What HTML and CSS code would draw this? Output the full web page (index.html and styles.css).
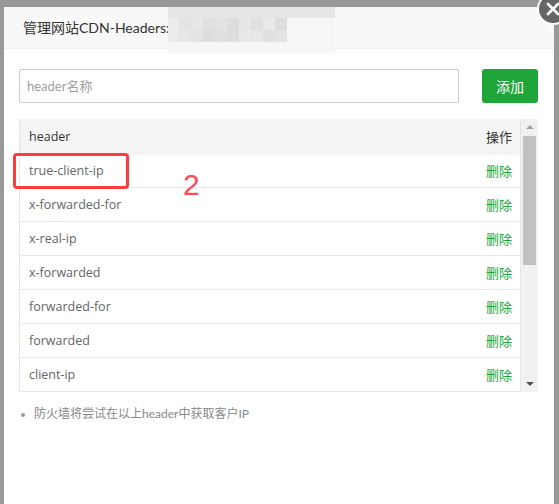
FILE: index.html
```html
<!DOCTYPE html>
<html lang="zh-CN">
<head>
<meta charset="utf-8">
<title>管理网站CDN-Headers</title>
<link rel="stylesheet" href="styles.css">
</head>
<body>
<div class="dialog">
  <div class="dlg-head">
    <span class="title">管理网站CDN-Headers:</span>
  </div>
  <div class="blur">
    <div class="blur-band"></div>
    <div class="blur-mid">
      <div class="blur-left"></div>
      <div class="mosaic">
        <i class="c1"></i><i class="c2"></i><i class="c3"></i><i class="c1"></i><i class="c4"></i><i class="c2"></i><i class="c3"></i><i class="c5"></i><i class="c4"></i>
        <i class="c2"></i><i class="c1"></i><i class="c4"></i><i class="c3"></i><i class="c4"></i><i class="c5"></i><i class="c2"></i><i class="c3"></i><i class="c1"></i>
      </div>
    </div>
  </div>
  <button class="close" aria-label="关闭">
    <svg width="14" height="14" viewBox="0 0 14 14"><path d="M2 2L12 12M12 2L2 12" stroke="#fff" stroke-width="2.6" stroke-linecap="round"/></svg>
  </button>
  <div class="dlg-body">
    <div class="add-row">
      <input class="hdr-input" type="text" placeholder="header名称">
      <button class="btn-add">添加</button>
    </div>
    <div class="tbl-wrap">
      <div class="tbl">
        <div class="thead-row">
          <span class="th-name">header</span>
          <span class="th-op">操作</span>
        </div>
        <table>
          <tbody>
            <tr><td>true-client-ip</td><td class="col-op"><a class="del">删除</a></td></tr>
            <tr><td>x-forwarded-for</td><td class="col-op"><a class="del">删除</a></td></tr>
            <tr><td>x-real-ip</td><td class="col-op"><a class="del">删除</a></td></tr>
            <tr><td>x-forwarded</td><td class="col-op"><a class="del">删除</a></td></tr>
            <tr><td>forwarded-for</td><td class="col-op"><a class="del">删除</a></td></tr>
            <tr><td>forwarded</td><td class="col-op"><a class="del">删除</a></td></tr>
            <tr><td>client-ip</td><td class="col-op"><a class="del">删除</a></td></tr>
          </tbody>
        </table>
      </div>
      <div class="scrollbar">
        <span class="arr up"></span>
        <span class="thumb"></span>
        <span class="rest"></span>
        <span class="arr down"></span>
      </div>
    </div>
    <ul class="tips">
      <li>防火墙将尝试在以上header中获取客户IP</li>
    </ul>
  </div>
</div>
<div class="mark-box"></div>
<div class="mark-num">2</div>
</body>
</html>
```

FILE: styles.css
```css
html, body {
  margin: 0;
  padding: 0;
}
body {
  background: #999999;
  width: 559px;
  height: 504px;
  overflow: hidden;
  position: relative;
  font-family: Lato, "Noto Sans CJK SC", sans-serif;
}
.dialog {
  position: relative;
  margin: 7px 5px 0 4px;
  width: 550px;
  height: 497px;
  background: #fff;
}
.dlg-head {
  height: 41px;
  line-height: 42px;
  background: #f8f8f8;
  border-bottom: 1px solid #eeeeee;
  padding-left: 19px;
  font-size: 14px;
  color: #333;
}
.blur {
  position: absolute;
  left: 164px;
  top: 0;
  width: 167px;
  height: 46px;
  background: #f6f6f6;
  display: flex;
  flex-direction: column;
}
.blur-band {
  height: 11px;
  background: #e6e6e6;
}
.blur-mid {
  display: flex;
  height: 24px;
}
.blur-left {
  width: 11px;
  background: #ececec;
}
.mosaic {
  display: grid;
  grid-template-columns: repeat(9, 12px);
  grid-template-rows: repeat(2, 12px);
}
.mosaic i { display: block; }
.mosaic .c1 { background: #e3e3e3; }
.mosaic .c2 { background: #e7e7e7; }
.mosaic .c3 { background: #e0e0e0; }
.mosaic .c4 { background: #dddddd; }
.mosaic .c5 { background: #e9e9e9; }

.close {
  position: absolute;
  left: 533px;
  top: -14px;
  width: 32px;
  height: 32px;
  border-radius: 50%;
  border: 2px solid #fff;
  background: #666;
  padding: 0;
  display: flex;
  align-items: center;
  justify-content: center;
  box-sizing: border-box;
}

.dlg-body {
  padding: 20px 16px 0 15px;
}
.add-row {
  display: flex;
  justify-content: space-between;
  align-items: center;
}
.hdr-input {
  width: 440px;
  height: 34px;
  box-sizing: border-box;
  border: 1px solid #cccccc;
  border-radius: 2px;
  padding: 0 7px;
  font-family: inherit;
  font-size: 13px;
  color: #333;
  outline: none;
}
.hdr-input::placeholder { color: #a0a0a0; }
.btn-add {
  width: 56px;
  height: 34px;
  border: none;
  border-radius: 3px;
  background: #20a53a;
  color: #fff;
  font-family: inherit;
  font-size: 14px;
  padding: 0;
}

.tbl-wrap {
  margin-top: 16px;
  display: flex;
  height: 273px;
}
.tbl {
  width: 501px;
  border-left: 1px solid #e6e6e6;
  border-right: 1px solid #e6e6e6;
  font-family: "Open Sans", "Noto Sans CJK SC", sans-serif;
}
.thead-row {
  height: 35px;
  display: flex;
  align-items: center;
  justify-content: space-between;
  padding: 0 8px 0 9px;
  background: #f4f4f4;
  color: #333;
  font-size: 12.5px;
  box-shadow: 0 1px 2px rgba(0,0,0,0.06);
  position: relative;
}
.th-op { font-size: 13px; }
table {
  width: 100%;
  border-collapse: collapse;
  font-size: 12.5px;
}
td {
  height: 33px;
  padding: 0 8px 0 9px;
  color: #666;
  border-bottom: 1px solid #e8e8e8;
}
.col-op { text-align: right; font-size: 13px; }
.del { color: #20a53a; }

.scrollbar {
  width: 17px;
  background: #f1f1f1;
  display: flex;
  flex-direction: column;
  align-items: center;
}
.arr {
  width: 0;
  height: 0;
  border-left: 4px solid transparent;
  border-right: 4px solid transparent;
}
.arr.up {
  margin-top: 6px;
  border-bottom: 4px solid #a3a3a3;
}
.thumb {
  margin-top: 7px;
  width: 13px;
  height: 129px;
  background: #c1c1c1;
}
.rest { flex: 1; }
.arr.down {
  margin-bottom: 6px;
  border-top: 4px solid #505050;
}

.tips {
  list-style: none;
  margin: 12px 0 0;
  padding: 0 0 0 15px;
  font-size: 12px;
  line-height: 20px;
  color: #888;
}
.tips li { position: relative; }
.tips li::before {
  content: "";
  position: absolute;
  left: -13px;
  top: 9px;
  width: 4px;
  height: 4px;
  border-radius: 50%;
  background: #999;
}

.mark-box {
  position: absolute;
  left: 13px;
  top: 153px;
  width: 116px;
  height: 36px;
  box-sizing: border-box;
  border: 3px solid #ff3b3b;
  border-radius: 4px;
}
.mark-num {
  position: absolute;
  left: 183px;
  top: 165px;
  font-family: "Liberation Sans", Arial, sans-serif;
  font-size: 30px;
  line-height: 40px;
  color: #ff4a5a;
}
```
